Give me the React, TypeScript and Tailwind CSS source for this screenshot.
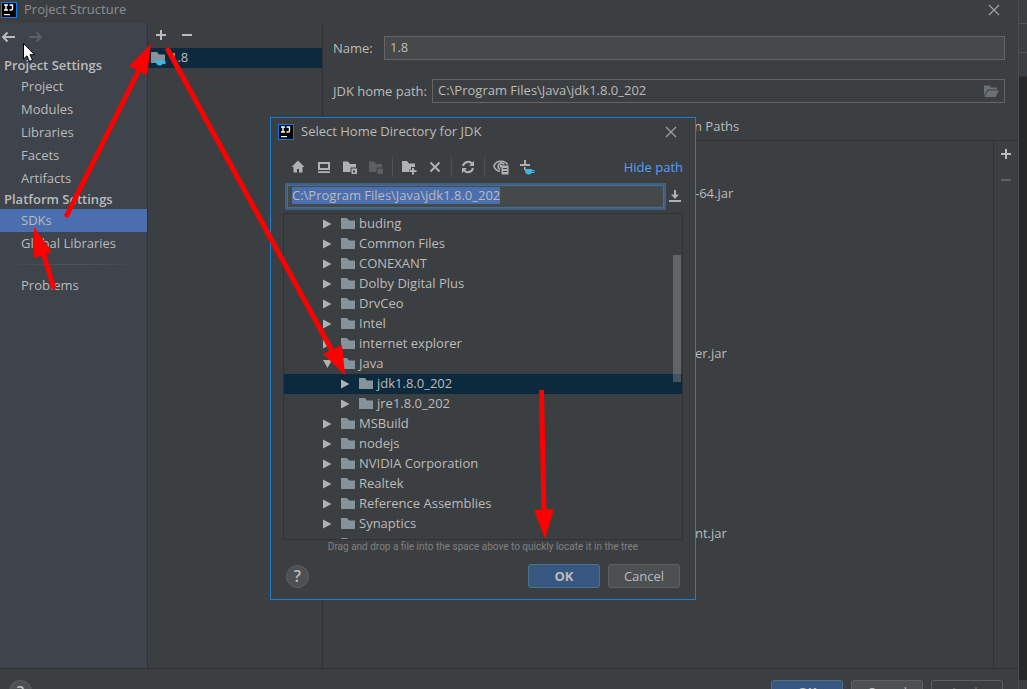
import type { ReactNode } from 'react';
import clsx from 'clsx';

const projectItems = ['Project', 'Modules', 'Libraries', 'Facets', 'Artifacts'];
const platformItems = ['SDKs', 'Global Libraries'];

// Row index -> the end of the jar path that sticks out past the dialog
const ROW_COUNT = 23;
const jarTails: Record<number, string> = {
  2: '-64.jar',
  10: 'er.jar',
  19: 'nt.jar',
};

interface TreeNode {
  name: string;
  nested?: boolean;
  open?: boolean;
  selected?: boolean;
}

const tree: TreeNode[] = [
  { name: 'buding' },
  { name: 'Common Files' },
  { name: 'CONEXANT' },
  { name: 'Dolby Digital Plus' },
  { name: 'DrvCeo' },
  { name: 'Intel' },
  { name: 'internet explorer' },
  { name: 'Java', open: true },
  { name: 'jdk1.8.0_202', nested: true, selected: true },
  { name: 'jre1.8.0_202', nested: true },
  { name: 'MSBuild' },
  { name: 'nodejs' },
  { name: 'NVIDIA Corporation' },
  { name: 'Realtek' },
  { name: 'Reference Assemblies' },
  { name: 'Synaptics' },
  { name: '' },
];

const CUP = 'M6 10h7v1h2.5v3H12.5c-.6 1-1.6 1.500-3 1.500C7.500 15.500 6 14 6 12zM13 12v1h1.500v-1z';

function Icon({ children, className }: { children: ReactNode; className?: string }) {
  return (
    <svg viewBox="0 0 16 16" className={clsx('size-4 shrink-0', className)} fill="currentColor" aria-hidden="true">
      {children}
    </svg>
  );
}

function Logo() {
  return (
    <Icon>
      <rect width="16" height="16" fill="#087cfa" />
      <rect x="1" y="1" width="14" height="14" fill="#000" />
      <path d="M3 3h4M5 3v5M3 8h4M8.500 3h3v3.800q0 1.200-1.500 1.200H8.500" fill="none" stroke="#fff" strokeWidth="1.400" />
      <path d="M3 12h6v1.200H3z" fill="#fff" />
    </Icon>
  );
}

function Close() {
  return (
    <Icon className="text-[#a0a2a3]">
      <path d="M3 3l10 10M13 3L3 13" stroke="currentColor" strokeWidth="1.200" />
    </Icon>
  );
}

function Plus() {
  return (
    <Icon>
      <path d="M7 3h2v4h4v2H9v4H7V9H3V7h4z" />
    </Icon>
  );
}

function Minus() {
  return (
    <Icon>
      <path d="M3 7h10v2H3z" />
    </Icon>
  );
}

function Folder() {
  return (
    <Icon className="text-[#87939a]">
      <path d="M1 2h6l2 2.500h6V13H1z" />
    </Icon>
  );
}

function ToolButton({ label, children, className }: { label: string; children: ReactNode; className?: string }) {
  return (
    <button type="button" aria-label={label} className={clsx('flex h-6 w-[26px] shrink-0 items-center justify-center', className)}>
      {children}
    </button>
  );
}

function Separator() {
  return <span className="mx-[3px] h-5 w-px shrink-0 bg-[#515151]" />;
}

function DialogButton({ label, kind = 'plain' }: { label: string; kind?: 'primary' | 'plain' | 'disabled' }) {
  return (
    <button
      type="button"
      disabled={kind === 'disabled'}
      className={clsx(
        'h-6 w-[72px] shrink-0 rounded-[3px] border text-center leading-5',
        kind === 'primary' && 'border-[#4c708c] bg-[#365880] font-bold',
        kind === 'plain' && 'border-[#5e6060] bg-[#4c5052]',
        kind === 'disabled' && 'border-[#5e6060] text-[#777777]'
      )}
    >
      {label}
    </button>
  );
}

function HelpButton() {
  return (
    <button
      type="button"
      aria-label="Help"
      className="flex size-[23px] shrink-0 items-center justify-center rounded-full border border-[#5e6060] bg-[#4c5052] text-base font-semibold"
    >
      ?
    </button>
  );
}

function NavItem({ label, selected }: { label: string; selected?: boolean }) {
  return (
    <a href="#" className={clsx('block h-[23px] pl-[21px] leading-[23px]', selected && 'bg-[#4b6eaf]')}>
      {label}
    </a>
  );
}

function Sidebar() {
  return (
    <nav className="w-[148px] shrink-0 border-r border-[#323232] bg-[#3e434c]">
      <div className="flex h-[34px] pt-[6px]">
        <button type="button" aria-label="Back" className="flex h-4 w-[27px]">
          <Icon>
            <path d="M15 8H3M7.500 3.500L3 8l4.500 4.500" fill="none" stroke="currentColor" strokeWidth="2" />
          </Icon>
        </button>
        <button type="button" aria-label="Forward" className="h-4 text-[#5c6066]">
          <Icon>
            <path d="M2 8h12M9.500 3.500L14 8l-4.500 4.500" fill="none" stroke="currentColor" strokeWidth="2" />
          </Icon>
        </button>
      </div>
      <h2 className="h-[18px] pl-1 leading-[17px] font-semibold">Project Settings</h2>
      {projectItems.map((item) => (
        <NavItem key={item} label={item} />
      ))}
      <h2 className="h-[19px] pl-1 leading-[19px] font-semibold">Platform Settings</h2>
      {platformItems.map((item) => (
        <NavItem key={item} label={item} selected={item === 'SDKs'} />
      ))}
      <div className="mx-1 my-[9px] h-px bg-linear-to-r from-transparent via-[#55565a] to-transparent" />
      <NavItem label="Problems" />
    </nav>
  );
}

function SdkList() {
  return (
    <section className="w-[175px] shrink-0 border-r border-[#323232]">
      <div className="flex h-[25px]">
        <ToolButton label="Add SDK"><Plus /></ToolButton>
        <ToolButton label="Remove SDK"><Minus /></ToolButton>
      </div>
      <div className="flex h-5 items-center gap-1 bg-[#0d293e] pl-[2px]">
        <Icon className="text-[#87939a]">
          <path d="M1 2h6l2 2.500h6V13H1z" />
          <path d={CUP} fill="#3fb6e0" />
        </Icon>
        <span className="pb-[2px]">1.8</span>
      </div>
    </section>
  );
}

function SdkDetails() {
  return (
    <section className="flex min-w-0 flex-1 flex-col">
      <div className="flex flex-col gap-[19px] pt-[13px] pr-[13px] pl-[10px]">
        <div className="flex items-center">
          <label htmlFor="sdk-name" className="w-[51px]">Name:</label>
          <input
            id="sdk-name"
            defaultValue="1.8"
            className="h-6 min-w-0 flex-1 border border-[#646464] bg-[#45494a] px-[5px] pb-[2px] outline-none"
          />
        </div>
        <div className="flex items-center">
          <label htmlFor="sdk-home" className="w-[99px] whitespace-nowrap">JDK home path:</label>
          <div className="flex h-6 min-w-0 flex-1 items-center border border-[#646464] pr-[5px]">
            <input
              id="sdk-home"
              readOnly
              defaultValue="C:\Program Files\Java\jdk1.8.0_202"
              className="min-w-0 flex-1 px-[5px] pb-[2px] outline-none"
            />
            <button type="button" aria-label="Browse" className="text-[#6a7073]">
              <Icon>
                <path d="M1 2.500h5.500l1.500 2h6v2H4.500L1 13z" />
                <path d="M5 7.500h11L12.500 14H1.500z" />
              </Icon>
            </button>
          </div>
        </div>
      </div>
      <div className="flex h-[38px] items-center border-b border-[#323232] pt-2 pl-[371px] whitespace-nowrap">
        <button type="button">n Paths</button>
      </div>
      <div className="flex min-h-0 flex-1">
        <ul className="min-w-0 flex-1 overflow-hidden pt-[2px] pl-[372px]">
          {Array.from({ length: ROW_COUNT }, (_, row) => (
            <li key={row} className="h-5 leading-5 whitespace-nowrap">{jarTails[row]}</li>
          ))}
        </ul>
        <div className="flex w-[25px] flex-col items-center gap-[2px] border-l border-[#323232] pt-px">
          <ToolButton label="Add path"><Plus /></ToolButton>
          <ToolButton label="Remove path" className="text-[#5f6162]"><Minus /></ToolButton>
        </div>
      </div>
    </section>
  );
}

function FileToolbar() {
  return (
    <div className="flex h-[33px] items-center pr-3 pl-[14px] text-[#afb1b3]">
      <ToolButton label="Home">
        <Icon><path d="M8 1.500L1.500 8H3.500v5.500H7V10h2v3.500h3.500V8h2z" /></Icon>
      </ToolButton>
      <ToolButton label="Desktop">
        <Icon>
          <path d="M2 3h12v8H2zM4 5v4h8V5z" fillRule="evenodd" />
          <path d="M2 12.200h12V14H2z" />
        </Icon>
      </ToolButton>
      <ToolButton label="Project directory">
        <Icon>
          <path d="M1 2.500h5l2 2.500h6v3.500H8.500V13H1z" />
          <path d="M9.500 9.500H15V15H9.500zM11 11.500v2h2v-2z" fillRule="evenodd" />
        </Icon>
      </ToolButton>
      <ToolButton label="Module directory" className="text-[#5c5f61]">
        <Icon>
          <path d="M1 2.500h5l2 2.500h6v3.500H8.500V13H1z" />
          <path d="M9.500 9.500H15V15H9.500z" />
        </Icon>
      </ToolButton>
      <Separator />
      <ToolButton label="New folder">
        <Icon>
          <path d="M1 2h5l2 2.500h6V8h-4v2.500H8V13H1z" />
          <path d="M11 9h2v2h2.500v2H13v2.500h-2V13H8.500v-2H11z" />
        </Icon>
      </ToolButton>
      <ToolButton label="Delete">
        <Icon><path d="M3.500 3.500l9 9M12.500 3.500l-9 9" stroke="currentColor" strokeWidth="2" /></Icon>
      </ToolButton>
      <Separator />
      <ToolButton label="Refresh">
        <Icon>
          <path d="M3 7a5.200 5.200 0 0 1 9.200-2.200M13 9a5.200 5.200 0 0 1-9.200 2.200" fill="none" stroke="currentColor" strokeWidth="2" />
          <path d="M14 1.800V7H9zM2 14.200V9h5z" />
        </Icon>
      </ToolButton>
      <Separator />
      <ToolButton label="Show hidden files">
        <Icon>
          <path d="M14.500 5.500C13.200 3.600 11 2.300 8 2.300 4.500 2.300 2 4.300.8 7.200 1.800 9.800 4 11.800 7 12.200" fill="none" stroke="currentColor" strokeWidth="1.600" />
          <path d="M11.200 5.500A3.300 3.300 0 1 0 7 10.300" fill="none" stroke="currentColor" strokeWidth="1.600" />
          <circle cx="8" cy="7" r="1.400" />
          <path d="M8.500 6.500h7V15.500h-7zM10 9v1h4V9zM10 12v1h4v-1z" fillRule="evenodd" />
        </Icon>
      </ToolButton>
      <ToolButton label="Add JDK">
        <Icon>
          <path d="M5 1h2v4h4v2H1V5h4zM5 8h1.500v3H5z" />
          <path d={CUP} fill="#3fb6e0" />
        </Icon>
      </ToolButton>
      <button type="button" className="ml-auto whitespace-nowrap text-[#589df6]">Hide path</button>
    </div>
  );
}

function TreeRow({ name, nested, open, selected }: TreeNode) {
  return (
    <li className={clsx('flex h-5 items-center', nested ? 'pl-[54px]' : 'pl-9', selected && 'bg-[#0d293e]')}>
      <Icon className={clsx('mr-1', name ? 'text-[#afb1b3]' : 'invisible')}>
        {open ? <path d="M3 4h9l-4.500 8z" /> : <path d="M3 3.500l8.500 4.500L3 12.500z" />}
      </Icon>
      <Folder />
      <span className="ml-[3px] pb-[2px] whitespace-nowrap">{name}</span>
    </li>
  );
}

function HomeDirectoryDialog() {
  return (
    <div
      role="dialog"
      aria-label="Select Home Directory for JDK"
      className="absolute top-[117px] left-[270px] w-[426px] border border-[#1a7fd4] bg-[#3c3f41]"
    >
      <header className="flex h-8 items-center pr-4 pb-1 pl-[7px]">
        <Logo />
        <h1 className="ml-[7px] flex-1 pb-[2px]">Select Home Directory for JDK</h1>
        <button type="button" aria-label="Close dialog"><Close /></button>
      </header>
      <FileToolbar />
      <div className="flex h-[27px] items-center pr-3 pl-[14px]">
        <label className="flex h-[27px] min-w-0 flex-1 items-center border-2 border-[#3d6185] bg-[#45494a] pb-[2px] pl-[5px] ring-inset ring-1 ring-[#466d94]">
          <input
            aria-label="Path"
            defaultValue="C:\Program Files\Java\jdk1.8.0_202"
            className="field-sizing-content h-[17px] bg-[#4b6eaf] leading-[17px] outline-none"
          />
        </label>
        <button type="button" aria-label="Path history" className="ml-px text-[#afb1b3]">
          <Icon>
            <path d="M7 1h2v4.500h3L8 10 4 5.500h3zM2 11h12v2H2z" />
          </Icon>
        </button>
      </div>
      <div className="relative mx-3 mt-[3px] h-[327px] overflow-hidden border border-[#323232]">
        <ul>
          {tree.map((node) => (
            <TreeRow key={node.name} {...node} />
          ))}
        </ul>
        <div className="absolute top-[41px] right-px h-[127px] w-2 bg-[#a6a6a6]/35" />
      </div>
      <p className="h-[14px] text-center font-['Roboto',sans-serif] text-[10px] leading-[14px] text-[#808080]">
        Drag and drop a file into the space above to quickly locate it in the tree
      </p>
      <footer className="flex items-center gap-2 pt-[10px] pr-[15px] pb-[11px] pl-[15px]">
        <HelpButton />
        <span className="flex-1" />
        <DialogButton label="OK" kind="primary" />
        <DialogButton label="Cancel" />
      </footer>
    </div>
  );
}

// Red walkthrough arrows and the mouse pointer
function Annotations() {
  return (
    <svg className="pointer-events-none absolute top-0 left-0" width="700" height="600" aria-hidden="true">
      <g stroke="#fe0000" strokeWidth="5">
        <path d="M66 217L142 64M167 48L336 358M54 289L43 252M541.500 390L544 514" />
      </g>
      <g fill="#fe0000">
        <path d="M151 44L129 66L147 75z" />
        <path d="M345 375L323 354L342 345z" />
        <path d="M34 227L52 252L34 258z" />
        <path d="M545 539L534 510L554 509z" />
      </g>
      <path d="M23.500 43.500v15.500l3.500-3.200 2.500 5.700 3-1.300-2.500-5.500h4.500z" fill="#fff" stroke="#000" />
    </svg>
  );
}

export default function App() {
  return (
    <div className="relative flex h-screen overflow-hidden bg-[#3c3f41] font-['Open_Sans','Noto_Sans',sans-serif] text-[13px] leading-5 text-[#bbbbbb]">
      <div className="flex min-w-0 flex-1 flex-col">
        <header className="flex h-[23px] shrink-0 items-center pr-4 pb-[3px] pl-px text-[#8c8e8f]">
          <Logo />
          <span className="ml-[7px] flex-1 pb-[2px]">Project Structure</span>
          <button type="button" aria-label="Close"><Close /></button>
        </header>
        <main className="flex min-h-0 flex-1">
          <Sidebar />
          <SdkList />
          <SdkDetails />
        </main>
        <footer className="flex h-[21px] shrink-0 items-start gap-2 overflow-hidden border-t border-[#323232] pt-[11px] pr-[15px] pl-[9px]">
          <HelpButton />
          <span className="flex-1" />
          <DialogButton label="OK" kind="primary" />
          <DialogButton label="Cancel" />
          <DialogButton label="Apply" kind="disabled" />
        </footer>
      </div>
      <aside className="flex w-[9px] shrink-0 flex-col border-l border-[#4b4d4f]">
        <div className="h-6 border-b border-[#515355]" />
        <div className="h-[29px] border-b border-[#515355]" />
        <div className="h-6 border-b border-[#323232]" />
        <div className="flex-1 bg-[#282828]" />
        <div className="h-[9px]" />
      </aside>
      <HomeDirectoryDialog />
      <Annotations />
    </div>
  );
}
